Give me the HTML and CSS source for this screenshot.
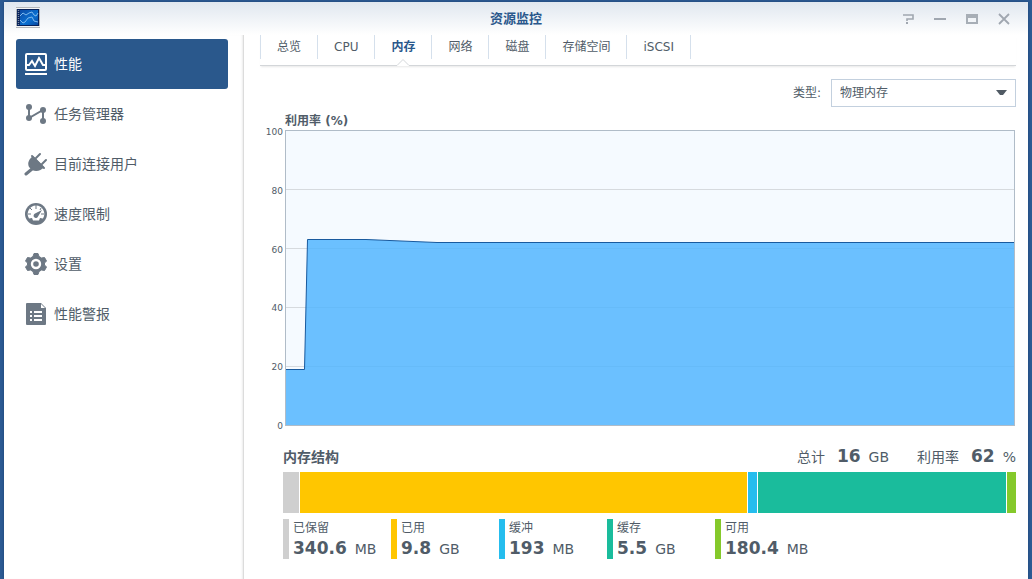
FILE: index.html
```
<!DOCTYPE html>
<html lang="zh-CN">
<head>
<meta charset="utf-8">
<title>资源监控</title>
<link rel="stylesheet" href="styles.css">
</head>
<body>
<div class="window">
  <header class="titlebar">
    <svg class="app-icon" width="24" height="22" viewBox="0 0 24 22" aria-hidden="true">
      <defs><linearGradient id="screen" x1="0" y1="0" x2="1" y2="1"><stop offset="0" stop-color="#0b4ba6"/><stop offset=".6" stop-color="#0a6fd0"/><stop offset="1" stop-color="#0848a0"/></linearGradient></defs>
      <rect width="24" height="21" fill="#b4b7ba"/>
      <rect y="1" width="24" height="1" fill="#f4f4f4"/>
      <rect y="19" width="24" height="1" fill="#f1f1f1"/>
      <rect x="1" y="2" width="22" height="17" fill="#06215a"/>
      <rect x="4" y="3" width="18" height="15" fill="url(#screen)"/>
      <path d="M2.500 3v15" stroke="#7d8da5" stroke-width="1.400" stroke-dasharray="1 1"/>
      <path d="M4 9l3-3 3 2 3-2 3-1 2 3 2 1 2-3" fill="none" stroke="#7db9ee"/>
      <path d="M4 13l3 3 2-1 3-4 4-1 2 4 4 1" fill="none" stroke="#7db9ee"/>
    </svg>
    <h1 class="title">资源监控</h1>
    <div class="controls">
      <button type="button" aria-label="帮助"><svg width="12" height="12" viewBox="0 0 12 12"><path d="M1 2h10v4H5v2" fill="none" stroke="#a0a7b0" stroke-width="1.600"/><path d="M4 9h2v2H4z" fill="#a0a7b0"/></svg></button>
      <button type="button" aria-label="最小化"><svg width="12" height="12" viewBox="0 0 12 12"><path d="M0 5h12v2H0z" fill="#a0a7b0"/></svg></button>
      <button type="button" aria-label="最大化"><svg width="12" height="12" viewBox="0 0 12 12"><path d="M0 1h12v10H0zM2 5v4h8V5z" fill="#a7aeb6" fill-rule="evenodd"/></svg></button>
      <button type="button" aria-label="关闭"><svg width="12" height="12" viewBox="0 0 12 12"><path d="M1 1l10 10M11 1L1 11" stroke="#a0a7b0" stroke-width="1.800"/></svg></button>
    </div>
  </header>
  <div class="body">
    <nav class="sidebar">
      <a class="item active" href="#"><svg width="24" height="24" viewBox="0 0 24 24"><g fill="none" stroke="#fff" stroke-width="2"><rect x="2" y="2" width="20" height="16" rx="1"/><path d="M3 13h2l3-4 3 5 4-8 4 7h3M1 22h22"/></g></svg>性能</a>
      <a class="item" href="#"><svg width="24" height="24" viewBox="0 0 24 24"><g fill="#6d7884"><path d="M5 5v11L19 8v12" fill="none" stroke="#6d7884" stroke-width="2"/><circle cx="5" cy="5" r="3"/><circle cx="5" cy="16" r="3"/><circle cx="19" cy="8" r="3"/><circle cx="19" cy="19" r="3"/></g></svg>任务管理器</a>
      <a class="item" href="#"><svg width="24" height="24" viewBox="0 0 24 24"><path d="M9 4l11 11c-3 4-8 5-12 3l-3-3C3 11 5 7 9 4z" fill="#6d7884"/><path d="M2 22l6-5" stroke="#6d7884" stroke-width="3" stroke-linecap="round"/><path d="M8 4l12 12M12 6l4-4M18 12l4-4" stroke="#6d7884" stroke-width="2" stroke-linecap="round"/></svg>目前连接用户</a>
      <a class="item" href="#"><svg width="24" height="24" viewBox="0 0 24 24"><circle cx="12" cy="12" r="11" fill="#6d7884"/><path d="M12 3.500a8.500 8.500 0 0 1 7 13l-3-.5-1 2.500H9L8 16l-3 .5a8.500 8.500 0 0 1 7-13z" fill="#fff"/><path d="M12 3v4M6 6l2 2M4 12h3M17 12h3M17 6l-1 2" stroke="#6d7884"/><path d="M18 8l-4 6.500a2.300 2.300 0 1 1-3-3z" fill="#6d7884"/></svg>速度限制</a>
      <a class="item" href="#"><svg width="24" height="24" viewBox="0 0 24 24"><path d="M10 1.500h4l1 3 2.500 1.500 3-.5 2 3.500-2 2v2l2 2-2 3.500-3-.5L15 19.500l-1 3h-4l-1-3L6.500 18l-3 .5-2-3.500 2-2v-2l-2-2 2-3.500 3 .5L9 4.500z" fill="#6d7884" stroke="#6d7884" stroke-linejoin="round"/><circle cx="12" cy="12" r="4" fill="#6d7884" stroke="#fff" stroke-width="2.400"/></svg>设置</a>
      <a class="item" href="#"><svg width="24" height="24" viewBox="0 0 24 24"><path d="M3 1h14l5 5v16a1 1 0 0 1-1 1H3a1 1 0 0 1-1-1V2a1 1 0 0 1 1-1z" fill="#6d7884"/><path d="M17 2v4h4z" fill="#fff"/><path d="M6 10h2M6 14h2M6 18h2M10 10h8M10 14h8M10 18h8" stroke="#fff" stroke-width="2"/></svg>性能警报</a>
    </nav>
    <main class="content">
      <nav class="tabs">
        <a class="tab" href="#">总览</a>
        <a class="tab" href="#">CPU</a>
        <a class="tab current" href="#">内存<svg class="caret" width="14" height="8" viewBox="0 0 14 8"><path d="M1 7l6-6 6 6v1H1z" fill="#fff"/><path d="M0 7.500h1l6-6 6 6h1" fill="none" stroke="#d3d6d9"/></svg></a>
        <a class="tab" href="#">网络</a>
        <a class="tab" href="#">磁盘</a>
        <a class="tab" href="#">存储空间</a>
        <a class="tab" href="#">iSCSI</a>
      </nav>
      <div class="filter">
        <label for="kind">类型:</label>
        <select id="kind"><option>物理内存</option></select>
      </div>
      <section class="chart">
        <h2 class="chart-title">利用率 (%)</h2>
        <div class="axis"><span>100</span><span>80</span><span>60</span><span>40</span><span>20</span><span>0</span></div>
        <svg class="plot" viewBox="0 0 730 296" preserveAspectRatio="none" role="img" aria-label="利用率">
          <rect width="730" height="296" fill="#f5faff"/>
          <path d="M0 59.500h730M0 118.500h730M0 177.500h730M0 236.500h730" stroke="#d6dade"/>
          <path d="M0 239.500H19.500L22.500 109.500H81L152 112.500H730V296H0z" fill="#4db3ff" fill-opacity=".82"/>
          <path d="M0 239.500H19.500L22.500 109.500H81L152 112.500H730" fill="none" stroke="#195a9e"/>
          <rect x=".5" y=".5" width="729" height="295" fill="none" stroke="#b0bcc8"/>
        </svg>
      </section>
      <section class="memory">
        <div class="memory-head">
          <h2>内存结构</h2>
          <p class="total">总计<b>16</b>GB</p>
          <p class="usage">利用率<b>62</b>%</p>
        </div>
        <div class="bar">
          <span class="reserved" style="flex-grow:16"></span>
          <span class="used" style="flex-grow:447"></span>
          <span class="buffer" style="flex-grow:9"></span>
          <span class="cached" style="flex-grow:248"></span>
          <span class="free" style="flex-grow:9"></span>
        </div>
        <ul class="legend">
          <li><i class="reserved"></i><div>已保留<p><b>340.6</b>MB</p></div></li>
          <li><i class="used"></i><div>已用<p><b>9.8</b>GB</p></div></li>
          <li><i class="buffer"></i><div>缓冲<p><b>193</b>MB</p></div></li>
          <li><i class="cached"></i><div>缓存<p><b>5.5</b>GB</p></div></li>
          <li><i class="free"></i><div>可用<p><b>180.4</b>MB</p></div></li>
        </ul>
      </section>
    </main>
  </div>
</div>
</body>
</html>
```
FILE: styles.css
```
* { box-sizing: border-box; }
body {
  margin: 0;
  padding: 2px 4px 0;
  background: #2d5b94;
  color: #505c68;
  font: 12px/16px "DejaVu Sans", "Noto Sans CJK SC", sans-serif;
}
h1, h2, p, ul { margin: 0; padding: 0; }
a { color: inherit; text-decoration: none; }
.window {
  display: flex;
  flex-direction: column;
  min-height: calc(100vh - 2px);
  background: #fff;
  box-shadow: 0 0 3px #1d4373;
}
.titlebar {
  display: grid;
  grid-template-columns: 1fr auto 1fr;
  align-items: center;
  height: 33px;
  padding: 0 12px;
  background: linear-gradient(#e0e7ef, #fff);
}
.app-icon { display: block; margin-bottom: 2px; }
.title { font-size: 13px; line-height: 20px; color: #2a588c; }
.controls { display: flex; justify-content: flex-end; gap: 20px; margin-right: 6px; }
.controls button { width: 12px; height: 12px; padding: 0; border: 0; background: none; }
.controls svg { display: block; }
.body { display: flex; flex: 1; }
.sidebar {
  flex: 0 0 240px;
  padding: 4px 15px 0 12px;
  border-right: 1px solid #dcdcdc;
  box-shadow: inset -2px 0 2px -1px #ececec;
}
.item {
  display: flex;
  align-items: center;
  gap: 6px;
  height: 50px;
  padding-left: 8px;
  border-radius: 3px;
  font-size: 14px;
}
.item.active { background: #2a588c; color: #fff; }
.content { flex: 1; min-width: 0; padding: 0 12px 0 16px; }
.tabs {
  display: flex;
  height: 31px;
  border-bottom: 1px solid #d3d6d9;
  box-shadow: 0 2px 2px -1px #e8e8e8;
}
.tab {
  position: relative;
  height: 24px;
  padding: 0 16px;
  border-left: 1px solid #d5e0ec;
  line-height: 24px;
}
.tab:last-child { border-right: 1px solid #d5e0ec; }
.tab.current { color: #2a588c; font-weight: bold; }
.caret { position: absolute; left: calc(50% - 7px); top: 23px; }
.filter {
  display: flex;
  justify-content: flex-end;
  align-items: center;
  gap: 10px;
  margin-top: 13px;
}
.filter select {
  width: 185px;
  height: 28px;
  padding: 0 8px;
  border: 1px solid #c3d0de;
  border-radius: 0;
  appearance: none;
  background: #fff url("data:image/svg+xml,%3Csvg xmlns='http://www.w3.org/2000/svg' width='12' height='6'%3E%3Cpath d='M0 0h11L7 5H4z' fill='%23505a64'/%3E%3C/svg%3E") no-repeat right 7px center;
  color: inherit;
  font: inherit;
}
.chart {
  display: grid;
  grid-template-columns: 23px 1fr;
  column-gap: 2px;
  margin: 5px 1px 0 0;
}
.chart-title { grid-column: 2; font-size: 12px; line-height: 18px; }
.axis {
  display: flex;
  flex-direction: column;
  justify-content: space-between;
  margin: -4px 0 -6px;
  text-align: right;
  font-size: 9px;
  line-height: 12px;
}
.plot { display: block; width: 100%; height: 296px; }
.memory { margin: 14px 0 0 23px; }
.memory-head {
  display: flex;
  align-items: baseline;
  height: 32px;
  font-size: 14px;
  line-height: 32px;
}
.memory-head h2 { flex: 1; font-size: 14px; }
.memory-head b { margin: 0 8px 0 12px; font-size: 17px; }
.usage { margin-left: 28px; }
.bar { display: flex; gap: 1px; height: 41px; }
.bar span { flex-basis: 0; }
.legend { display: flex; margin-top: 6px; list-style: none; }
.legend li { display: flex; gap: 4px; width: 108px; height: 40px; line-height: 18px; white-space: nowrap; }
.legend i { width: 6px; }
.legend p { font-size: 14px; line-height: 22px; }
.legend b { margin-right: 8px; font-size: 17px; }
.reserved { background: #cfcfcf; }
.used { background: #ffc600; }
.buffer { background: #25bdee; }
.cached { background: #1abc9c; }
.free { background: #85c92b; }
```
